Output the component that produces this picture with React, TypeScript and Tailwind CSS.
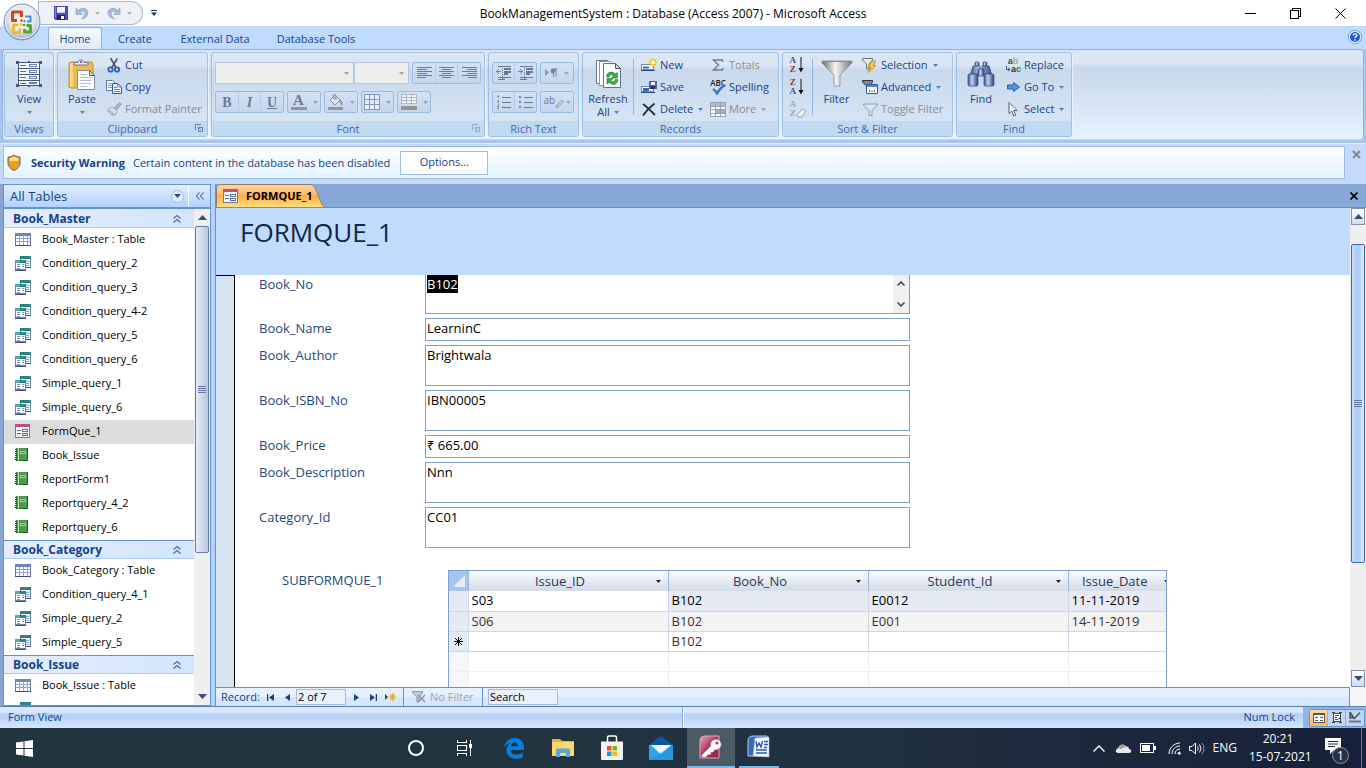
import { useEffect, useRef } from "react";
import type { ReactNode } from "react";

/* ---------- shared bits ---------- */

function Svg({ w, h, crisp, children, className = "" }: { w: number; h: number; crisp?: boolean; children: ReactNode; className?: string }) {
  return (
    <svg width={w} height={h} viewBox={`0 0 ${w} ${h}`} fill="none" shapeRendering={crisp ? "crispEdges" : "auto"} aria-hidden="true" className={`shrink-0 ${className}`}>
      {children}
    </svg>
  );
}

function Down({ color = "#5a7fb5" }: { color?: string }) {
  return (
    <Svg w={5} h={3}>
      <path d="M0 0h5L2.5 3z" fill={color} />
    </Svg>
  );
}

function Divider() {
  return <div className="mt-1.5 h-14 w-px self-start bg-[#94b6df]" />;
}

/* ---------- ribbon icons ---------- */

const OfficeLogo = () => (
  <Svg w={38} h={38}>
    <defs>
      <radialGradient id="orb" cx="50%" cy="40%" r="60%">
        <stop offset="0" stopColor="#ffffff" />
        <stop offset="0.6" stopColor="#e2e7ef" />
        <stop offset="0.9" stopColor="#aebbd0" />
        <stop offset="1" stopColor="#7d90b0" />
      </radialGradient>
    </defs>
    <circle cx="19" cy="19" r="18" fill="url(#orb)" stroke="#8295b3" />
    <circle cx="19" cy="19" r="16.5" stroke="#f6f9fd" strokeOpacity=".8" />
    <g strokeLinejoin="round">
      <path d="M14 17.500H9.500V9h9v5" stroke="#dd4413" strokeWidth="3" />
      <path d="M22 13.500h5.500v5h-3.500" stroke="#3f8edb" strokeWidth="2" />
      <path d="M15.500 22h-5v7.500h6.500v-4" stroke="#f5b616" strokeWidth="2.600" />
      <path d="M21.500 26v3h6v-6.500h-4" stroke="#58a628" strokeWidth="3" />
    </g>
    <circle cx="18.500" cy="17.500" r="1.300" fill="#dd4413" />
    <circle cx="21.500" cy="18" r="1.200" fill="#3f8edb" />
    <circle cx="18" cy="21.500" r="1.200" fill="#f5b616" />
    <circle cx="21" cy="22" r="1.300" fill="#58a628" />
  </Svg>
);

const SaveDisk = () => (
  <Svg w={14} h={14} crisp>
    <path d="M0 0h14v14H1l-1-1z" fill="#4a4db0" />
    <path d="M1 1h1v11H1z" fill="#8587d8" />
    <path d="M3 1h8v6H3z" fill="#f2f4fb" />
    <path d="M3 6h8v1H3z" fill="#c9cfe8" />
    <path d="M3 9h8v5H3z" fill="#26275e" />
    <path d="M7 10h3v3H7z" fill="#fff" />
  </Svg>
);

const Undo = ({ flip = false }: { flip?: boolean }) => (
  <Svg w={14} h={13} className={flip ? "-scale-x-100" : ""}>
    <path d="M1 1v6.500h6.500L5.300 5.300C7.500 3 10.300 4.500 9.700 7.300 9.300 9.300 8 10.800 6.500 12 10 11.500 13 9 13 5.500 12.600 1 7 0 3.300 3.300z" fill="#a9bcd8" stroke="#8ea5c8" strokeWidth=".7" />
  </Svg>
);

const ViewIcon = () => (
  <Svg w={26} h={28} crisp>
    <path d="M2.500 2.500h21v23h-21z" fill="#f4f7fc" stroke="#44597f" />
    <path d="M2 8.500h22M2 14.500h22M2 20.500h22" stroke="#44597f" />
    <path d="M4 5.500h6M4 11.500h6M4 17.500h6M4 23.500h6" stroke="#5c7196" />
    <path d="M13.500 4.500h7v2h-7zM13.500 10.500h7v2h-7zM13.500 16.500h7v2h-7zM13.500 22.500h7v1h-7z" fill="#fff" stroke="#6d80a3" />
    <path d="M0 1h3v3H0zM23 1h3v3h-3zM0 24h3v3H0zM23 24h3v3h-3zM12 1h2v2h-2zM12 25h2v2h-2z" fill="#44597f" />
  </Svg>
);

const PasteIcon = () => (
  <Svg w={28} h={31}>
    <rect x="1" y="3" width="24" height="26" rx="2" fill="#f0b94d" stroke="#c98e2b" />
    <path d="M2 4h3v24H2z" fill="#fad68c" />
    <path d="M6 6V3.500h4C10 0 16 0 16 3.500h4V6z" fill="#e5e8ee" stroke="#737b8b" />
    <circle cx="13" cy="3" r="1" fill="#555" />
    <path d="M9.500 11.500h12l5 5v14h-17z" fill="#fdfdff" stroke="#7c8fae" />
    <path d="M21.500 11.500v5h5z" fill="#d6e0ef" stroke="#4f6082" />
    <path d="M12 15.500h7M12 18.500h11M12 21.500h11M12 24.500h11M12 27.500h7" stroke="#b1bfd6" />
  </Svg>
);

const CutIcon = () => (
  <Svg w={14} h={15}>
    <path d="M3.500 0 9 9.500M10.500 0 5 9.500" stroke="#4c5a70" strokeWidth="1.700" />
    <path d="M10.500 0v3L8 6" stroke="#b2bccb" strokeWidth=".8" />
    <circle cx="3.500" cy="11.500" r="2.200" stroke="#2f5fb5" strokeWidth="1.800" />
    <circle cx="10" cy="11.500" r="2.200" stroke="#2f5fb5" strokeWidth="1.800" />
  </Svg>
);

const CopyIcon = () => (
  <Svg w={16} h={14}>
    <path d="M.5.5h6l3 3v7h-9z" fill="#fff" stroke="#5377bb" />
    <path d="M2 3.500h4M2 5.500h5M2 7.500h5" stroke="#7397d3" />
    <path d="M6.500 3.500h5l4 3.500v6.500h-9z" fill="#f6f9ff" stroke="#36579b" />
    <path d="M11.500 3.500v3.500h4M8 7.500h3M8 9.500h6M8 11.500h6" stroke="#5f86ca" />
  </Svg>
);

const PainterIcon = () => (
  <Svg w={16} h={14}>
    <path d="m8 6 5.500-5.500 2 1.500-5 6z" fill="#a9b2c2" stroke="#8994a8" strokeWidth=".7" />
    <path d="M6 4.500 11.500 9 9 13 5 9.500 1 8.500z" fill="#d8dfea" stroke="#9aa7bc" />
    <path d="M1 8.500 9 13l-3 .5z" fill="#98a4ba" />
  </Svg>
);

const AlignIcon = ({ kind }: { kind: "left" | "center" | "right" }) => (
  <Svg w={15} h={12} crisp>
    <path
      d={kind === "left" ? "M0 .5h15M0 2.500h10M0 4.500h15M0 6.500h10M0 8.500h15M0 10.500h9" : kind === "center" ? "M0 .5h15M3 2.500h9M0 4.500h15M3 6.500h9M0 8.500h15M3 10.500h9" : "M0 .5h15M5 2.500h10M0 4.500h15M5 6.500h10M0 8.500h15M6 10.500h9"}
      stroke="#6b7a92"
    />
  </Svg>
);

const IndentIcon = ({ out = false }: { out?: boolean }) => (
  <Svg w={16} h={14} crisp>
    <path d="M2 .5h13M2 11.500h13M2 13.500h7" stroke="#6b7a92" />
    <path d="M8 3h7M8 5.500h7M8 8h4" stroke="#6b7a92" strokeWidth="2" />
    <path d="M6.500 0v14" stroke="#6b7a92" strokeDasharray="1 1" />
    <path d={out ? "M0 5.500h5M3 4.500h1M3 6.500h1M2 3.500h1M2 7.500h1" : "M0 5.500h5M1 4.500h1M1 6.500h1M2 3.500h1M2 7.500h1"} stroke="#6f86ac" />
  </Svg>
);

const ListIcon = ({ numbered = false }: { numbered?: boolean }) => (
  <Svg w={16} h={14} crisp>
    <path d="M6 2.500h9M6 7.500h9M6 12.500h9" stroke="#6b7a92" />
    {numbered ? <path d="M1 1.500h1M2.500 0v3M1 5.500h2M1 7.500h2M1 11.500h2M1 13.500h2M2.500 9v5M2.500 5v3" stroke="#8391aa" /> : <path d="M1 1h2v2H1zM1 6h2v2H1zM1 11h2v2H1z" fill="#74839c" />}
  </Svg>
);

const DirectionIcon = () => (
  <Svg w={13} h={10}>
    <path d="m0 1 4 3.500L0 8z" fill="#8a9ab4" />
    <path d="M8.500 1v8M11 1v8" stroke="#74839c" />
    <path d="M12.500.5H8a2.500 2.500 0 0 0 0 5h.5z" fill="#74839c" />
  </Svg>
);

const HighlightIcon = () => (
  <span className="relative flex h-3.5 w-4 items-start text-[10px] leading-[10px] text-[#6b7a92]">
    ab
    <Svg w={9} h={10} className="absolute -right-1 bottom-0">
      <path d="m1 9 1-3 5-5 1.500 1.500-5 5z" fill="#c9cfd9" stroke="#8391aa" strokeWidth=".8" />
    </Svg>
  </span>
);

const FillIcon = () => (
  <Svg w={16} h={16}>
    <path d="m2 6 5-5 5 5-5 5z" fill="#e2e6ee" stroke="#8290aa" />
    <path d="M5 5V2c0-2 3-2 3 0v4M12 6c2 1 2.500 3 2 5-1.500-1-2-3-2-5z" stroke="#8290aa" fill="#b3bdcd" />
    <path d="M0 13h15v3H0z" fill="#9a938c" />
  </Svg>
);

const GridIcon = () => (
  <Svg w={16} h={16} crisp>
    <path d="M.5.5h15v15H.5zM5.500 0v16M10.500 0v16M0 5.500h16M0 10.500h16" fill="#e7eefa" stroke="#8196bb" />
  </Svg>
);

const AltFillIcon = () => (
  <Svg w={16} h={16} crisp>
    <path d="M.5.5h15v9H.5zM5.500 0v10M10.500 0v10M0 3.500h16M0 6.500h16" fill="#f2f3f6" stroke="#aeb5c1" />
    <path d="M0 12h16v4H0z" fill="#9a938c" />
  </Svg>
);

const RefreshIcon = () => (
  <Svg w={27} h={30}>
    <path d="M1.500 1.500h11l4 4v19h-15z" fill="#fff" stroke="#67738c" />
    <path d="M4.500 2.500h11l4 4v20h-15z" fill="#fff" stroke="#8894a9" />
    <path d="M8.500 4.500h12l5 5v19h-17z" fill="#fff" stroke="#67738c" />
    <path d="M20.500 4.500v5h5z" fill="#d3dae6" stroke="#4c5a73" />
    <path d="M11.500 18c0-5 6-6.500 8.500-3l2.500-1.500V19h-6l2-2c-1.500-2-4-1.500-4 1z" fill="#44a944" stroke="#1e7a27" strokeWidth=".6" />
    <path d="M23 20.500c0 5-6 6.500-8.500 3L12 25v-5.500h6l-2 2c1.500 2 4 1.500 4-1z" fill="#44a944" stroke="#1e7a27" strokeWidth=".6" />
  </Svg>
);

const NewIcon = () => (
  <Svg w={16} h={14}>
    <path d="M.5 6.500h12v5H.5z" fill="#fff" stroke="#6889bd" />
    <path d="M2 8.500h6v2H2z" fill="#3a6ab2" />
    <path d="M0 12.500h14" stroke="#27477e" />
    <path d="M12 0v9M7.500 4.500h9M9 1.500l6 6M15 1.500l-6 6" stroke="#e9bd1f" strokeWidth="1.300" />
    <circle cx="12" cy="4.500" r="2" fill="#fff6ac" />
  </Svg>
);

const SaveRecIcon = () => (
  <Svg w={16} h={13} crisp>
    <path d="M.5 5.500h12v5H.5z" fill="#fff" stroke="#6889bd" />
    <path d="M2 7h6v3H2z" fill="#3a6ab2" />
    <path d="M0 11h14v1H0z" fill="#27477e" />
    <path d="M8 0h8v8H8z" fill="#5a5da8" />
    <path d="M10 1h4v3h-4z" fill="#eef0fb" />
    <path d="M10 5h4v3h-4z" fill="#2b2d62" />
  </Svg>
);

const DeleteIcon = () => (
  <Svg w={14} h={13}>
    <path d="M1 1c4 3 8 7 12 11M12.500.5C8 4 4 8 1 12.500" stroke="#2d3238" strokeWidth="1.900" />
  </Svg>
);

const SigmaIcon = () => (
  <Svg w={12} h={12}>
    <path d="M10.500 3V1H1.500l5 5-5 5h9V9" stroke="#6f7b90" strokeWidth="1.500" />
  </Svg>
);

const SpellingIcon = () => (
  <span className="relative flex h-4 w-4 justify-center overflow-visible text-[8px] leading-[8px] font-semibold text-[#222]">
    ABC
    <Svg w={14} h={11} className="absolute bottom-0 left-0.5">
      <path d="M1 5c2 1 3 2.500 4 4.500C7 5.500 9.500 3 13 1" stroke="#3c72d0" strokeWidth="2.400" />
    </Svg>
  </span>
);

const MoreIcon = () => (
  <Svg w={16} h={15} crisp>
    <path d="M.5.5h15v14H.5z" fill="#fff" stroke="#98a2b4" />
    <path d="M1 1h14v3H1z" fill="#b7bfcc" />
    <path d="M5 8h10v3H5z" fill="#a7b0bf" />
    <path d="M5.500 1v13M10.500 1v13M1 4.500h14M1 7.500h14M1 11.500h14" stroke="#98a2b4" />
  </Svg>
);

const LETTERS = "flex flex-col items-center font-['Liberation_Serif',serif] text-[9px] leading-[9px] font-bold";

const SortIcon = ({ top, bottom, a, b }: { top: string; bottom: string; a: string; b: string }) => (
  <span className="flex h-[18px] w-4 items-center gap-0.5">
    <span className={LETTERS}>
      <span className={a}>{top}</span>
      <span className={b}>{bottom}</span>
    </span>
    <Svg w={6} h={16}>
      <path d="M3 0v13" stroke="#111" />
      <path d="M.500 11h5L3 15.500z" fill="#111" />
    </Svg>
  </span>
);

const ClearSortIcon = () => (
  <span className="relative flex h-[18px] w-4">
    <span className={`${LETTERS} text-[#97a2b5]`}>
      <span>A</span>
      <span>Z</span>
    </span>
    <Svg w={11} h={10} className="absolute bottom-0 left-1.5">
      <path d="m1 7 5-6 4 2-4 6H2z" fill="#eef1f6" stroke="#97a2b5" />
    </Svg>
  </span>
);

const FunnelBig = () => (
  <Svg w={32} h={28}>
    <defs>
      <linearGradient id="fun">
        <stop offset="0" stopColor="#6b6b6b" />
        <stop offset=".45" stopColor="#f5f5f5" />
        <stop offset="1" stopColor="#777" />
      </linearGradient>
    </defs>
    <path d="M1 1h30v2L19 15v11h-6V15L1 3z" fill="url(#fun)" stroke="#8c8c8c" strokeWidth=".8" />
    <path d="M1.500 1.500h29" stroke="#8a8a8a" />
  </Svg>
);

const FunnelSmall = ({ tone = "#707070", light = "#e7e7e7" }: { tone?: string; light?: string }) => <path d="M.5.500h10v1.500L7 6v5H4.500V6L.5 2z" fill={light} stroke={tone} />;

const SelectionIcon = () => (
  <Svg w={16} h={15}>
    <FunnelSmall />
    <path d="M11 3 6 9h3l-3 5.500 8-7h-3l3-4.500z" fill="#fbd335" stroke="#b58518" strokeWidth=".8" />
  </Svg>
);

const AdvancedIcon = () => (
  <Svg w={16} h={14}>
    <FunnelSmall tone="#333" light="#888" />
    <path d="M4.500 4.500h11v9h-11z" fill="#fff" stroke="#2f5aa5" />
    <path d="M5 5h10v2H5z" fill="#4f83d6" />
    <path d="M7 11h1M9.500 11h1M12 11h1" stroke="#333" strokeWidth="1.300" />
  </Svg>
);

const ToggleFilterIcon = () => (
  <Svg w={15} h={13}>
    <path d="M.5 1h14v1L9 7.500v5H6v-5L.5 2z" fill="#dfe6f0" stroke="#8b9bb5" />
  </Svg>
);

const Binoculars = () => (
  <Svg w={28} h={27}>
    <defs>
      <linearGradient id="bin">
        <stop offset="0" stopColor="#3a5596" />
        <stop offset=".4" stopColor="#bdd0f3" />
        <stop offset="1" stopColor="#2c4480" />
      </linearGradient>
    </defs>
    <g fill="url(#bin)" stroke="#2f4678" strokeWidth=".7">
      <rect x="8" y="1" width="4" height="4" rx="1" />
      <rect x="16" y="1" width="4" height="4" rx="1" />
      <path d="M6 5h7v8H3.500zM15 5h7l2.500 8H15z" />
      <rect x="1" y="13" width="10" height="12" rx="1.500" />
      <rect x="17" y="13" width="10" height="12" rx="1.500" />
      <rect x="11" y="8" width="6" height="7" />
    </g>
  </Svg>
);

const ReplaceIcon = () => (
  <span className="flex h-4 w-4 flex-col font-['Liberation_Sans',sans-serif] text-[9px] leading-[8px] font-bold">
    <span className="text-[#444]">
      a<span className="text-[#a0a8b5]">b</span>
    </span>
    <span className="flex items-center justify-end text-[#333]">
      <Svg w={5} h={6}>
        <path d="M.5 0v3.500h3M2 2l2 1.500L2 5" stroke="#3b5a94" />
      </Svg>
      a<span className="text-[#189228]">c</span>
    </span>
  </span>
);

const GoToIcon = () => (
  <Svg w={13} h={10}>
    <path d="M.5 3h6V.5l6 4.500-6 4.500V7h-6z" fill="#5b8fe6" stroke="#2f5cb0" />
  </Svg>
);

const PointerIcon = () => (
  <Svg w={10} h={15}>
    <path d="M1 .500v11l2.700-2.500 2 5 2-1-2-4.500H9z" fill="#fff" stroke="#4f5e78" />
  </Svg>
);

const Launcher = ({ tone = "#6683b0" }: { tone?: string }) => (
  <Svg w={8} h={8} crisp>
    <path d="M.5 6V.5H6M3.500 3.500h4v4h-4zM3 3l3 3" stroke={tone} fill="none" />
  </Svg>
);

/* ---------- ribbon parts ---------- */

function Group({ label, width, launcher, children }: { label: string; width: string; launcher?: string; children: ReactNode }) {
  return (
    <section
      aria-label={label}
      className={`${width} flex h-[85px] shrink-0 flex-col rounded-[3px] border border-[#9fc0e0] bg-linear-to-b from-[#dbe6f4] from-15% via-[#c8d9ed] via-20% to-[#d9e8f6] shadow-[1px_1px_0_#eaf3fc]`}
    >
      <div className="flex flex-1">{children}</div>
      <h2 className="relative flex h-[15px] items-center justify-center rounded-b-[2px] bg-[#c1d9f1] text-[11px] leading-[15px] text-[#3f68ab]">
        {label}
        {launcher && (
          <button aria-label={`${label} settings`} className="absolute right-1 bottom-1">
            <Launcher tone={launcher} />
          </button>
        )}
      </h2>
    </section>
  );
}

function Big({ icon, label, second, arrow, width }: { icon: ReactNode; label: string; second?: string; arrow?: boolean; width: string }) {
  return (
    <button className={`${width} flex flex-col items-center pt-1`}>
      <span className="flex h-[34px] items-center">{icon}</span>
      <span className="leading-4">{label}</span>
      <span className="flex h-2.5 items-center gap-1 leading-[10px]">
        {second}
        {arrow && <Down />}
      </span>
    </button>
  );
}

function Small({ icon, label, arrow, off }: { icon: ReactNode; label: string; arrow?: boolean; off?: boolean }) {
  return (
    <button disabled={off} className={`flex h-[22px] items-center gap-[3px] whitespace-nowrap ${off ? "text-[#8d8d8d]" : ""}`}>
      <span className="flex w-4 justify-center">{icon}</span>
      {label}
      {arrow && (
        <span className="ml-0.5">
          <Down color={off ? "#a9a9a9" : "#5a7fb5"} />
        </span>
      )}
    </button>
  );
}

const BOX = "flex h-[22px] shrink-0 items-center rounded-[2px] border border-[#9dbae0] bg-linear-to-b from-[#d3e1f3] to-[#c3d7f0] divide-x divide-[#b3cae8]";

function Tool({ label, width, children, arrow }: { label: string; width: string; children: ReactNode; arrow?: boolean }) {
  return (
    <button disabled aria-label={label} className={`${width} flex h-full items-center justify-center gap-1.5`}>
      {children}
      {arrow && <Down color="#a3a3a3" />}
    </button>
  );
}

function Combo({ label, width }: { label: string; width: string }) {
  return (
    <span className={`${width} relative flex h-[22px] items-center border border-[#b5c7de] bg-[#ededed]`}>
      <select disabled aria-label={label} className="h-full w-full appearance-none" />
      <span className="absolute right-1">
        <Down color="#a3a3a3" />
      </span>
    </span>
  );
}

function Ribbon() {
  return (
    <div className="flex h-[94px] shrink-0 flex-col bg-[#a9c5eb]">
      <div className="mx-0.5 flex h-[91px] gap-[3px] overflow-hidden rounded-[4px] border border-[#8db2e3] border-b-[#8ff0f5] bg-linear-to-b from-[#dbe6f4] from-15% via-[#c7d8ed] via-20% to-[#e4f3fd] px-px pt-0.5 text-[11px] text-[#15428b]">
        <Group label="Views" width="w-[50px]">
          <Big icon={<ViewIcon />} label="View" arrow width="w-full" />
        </Group>
        <Group label="Clipboard" width="w-[151px]" launcher="#6683b0">
          <Big icon={<PasteIcon />} label="Paste" arrow width="w-12" />
          <div className="flex flex-col pt-px">
            <Small icon={<CutIcon />} label="Cut" />
            <Small icon={<CopyIcon />} label="Copy" />
            <Small icon={<PainterIcon />} label="Format Painter" off />
          </div>
        </Group>
        <Group label="Font" width="w-[274px]" launcher="#9ba8bc">
          <div className="flex flex-col gap-[7px] px-[3px] pt-[9px]">
            <div className="flex">
              <Combo label="Font name" width="w-[139px]" />
              <Combo label="Font size" width="w-[55px]" />
              <div className={`${BOX} ml-[3px]`}>
                <Tool label="Align left" width="w-[23px]"><AlignIcon kind="left" /></Tool>
                <Tool label="Center" width="w-[22px]"><AlignIcon kind="center" /></Tool>
                <Tool label="Align right" width="w-[22px]"><AlignIcon kind="right" /></Tool>
              </div>
            </div>
            <div className="flex gap-[3px] text-[#6b7a92]">
              <div className={BOX}>
                <Tool label="Bold" width="w-[23px]"><b className="font-['Liberation_Serif',serif] text-[14px]">B</b></Tool>
                <Tool label="Italic" width="w-[22px]"><i className="font-['Liberation_Serif',serif] text-[14px] font-bold">I</i></Tool>
                <Tool label="Underline" width="w-[22px]"><u className="font-['Liberation_Serif',serif] text-[14px] font-bold">U</u></Tool>
              </div>
              <div className={BOX}>
                <Tool label="Font color" width="w-8" arrow>
                  <span className="flex w-4 flex-col items-center border-b-[3px] border-[#9a938c] font-['Liberation_Serif',serif] text-[15px] leading-[13px] font-bold">A</span>
                </Tool>
              </div>
              <div className={BOX}><Tool label="Fill color" width="w-8" arrow><FillIcon /></Tool></div>
              <div className={BOX}><Tool label="Gridlines" width="w-[31px]" arrow><GridIcon /></Tool></div>
              <div className={BOX}><Tool label="Alternate fill" width="w-8" arrow><AltFillIcon /></Tool></div>
            </div>
          </div>
        </Group>
        <Group label="Rich Text" width="w-[91px]">
          <div className="grid grid-cols-[45px_34px] content-start gap-x-[3px] gap-y-[7px] px-[3px] pt-[9px]">
            <div className={BOX}>
              <Tool label="Decrease indent" width="w-[22px]"><IndentIcon /></Tool>
              <Tool label="Increase indent" width="w-[21px]"><IndentIcon out /></Tool>
            </div>
            <div className={BOX}><Tool label="Text direction" width="w-8" arrow><DirectionIcon /></Tool></div>
            <div className={BOX}>
              <Tool label="Numbering" width="w-[22px]"><ListIcon numbered /></Tool>
              <Tool label="Bullets" width="w-[21px]"><ListIcon /></Tool>
            </div>
            <div className={BOX}><Tool label="Highlight" width="w-8" arrow><HighlightIcon /></Tool></div>
          </div>
        </Group>
        <Group label="Records" width="w-[197px]">
          <Big icon={<RefreshIcon />} label="Refresh" second="All" arrow width="w-[50px]" />
          <Divider />
          <div className="flex w-[70px] flex-col pt-px pl-[7px]">
            <Small icon={<NewIcon />} label="New" />
            <Small icon={<SaveRecIcon />} label="Save" />
            <Small icon={<DeleteIcon />} label="Delete" arrow />
          </div>
          <div className="flex flex-col pt-px pl-1.5">
            <Small icon={<SigmaIcon />} label="Totals" off />
            <Small icon={<SpellingIcon />} label="Spelling" />
            <Small icon={<MoreIcon />} label="More" arrow off />
          </div>
        </Group>
        <Group label="Sort & Filter" width="w-[171px]">
          <div className="flex w-[29px] flex-col items-center pt-px">
            <button aria-label="Ascending" className="flex h-[22px] items-center"><SortIcon top="A" bottom="Z" a="text-[#2b5797]" b="text-[#963232]" /></button>
            <button aria-label="Descending" className="flex h-[22px] items-center"><SortIcon top="Z" bottom="A" a="text-[#963232]" b="text-[#2b5797]" /></button>
            <button aria-label="Clear all sorts" disabled className="flex h-[22px] items-center"><ClearSortIcon /></button>
          </div>
          <Divider />
          <Big icon={<FunnelBig />} label="Filter" width="w-[47px]" />
          <div className="flex flex-col pt-px pl-0.5">
            <Small icon={<SelectionIcon />} label="Selection" arrow />
            <Small icon={<AdvancedIcon />} label="Advanced" arrow />
            <Small icon={<ToggleFilterIcon />} label="Toggle Filter" off />
          </div>
        </Group>
        <Group label="Find" width="w-[116px]">
          <Big icon={<Binoculars />} label="Find" width="w-12" />
          <div className="flex flex-col pt-px">
            <Small icon={<ReplaceIcon />} label="Replace" />
            <Small icon={<GoToIcon />} label="Go To" arrow />
            <Small icon={<PointerIcon />} label="Select" arrow />
          </div>
        </Group>
      </div>
    </div>
  );
}

/* ---------- title bar and tabs ---------- */

function TitleBar() {
  return (
    <header className="relative shrink-0">
      <div className="flex h-[26px] items-center bg-white">
        <div className="flex flex-1 items-center">
          <div className="ml-[38px] flex h-6 w-[105px] items-center gap-[7px] rounded-tl-[4px] rounded-r-full rounded-bl-[18px] border border-[#aab6c8] bg-[#eef2f8] pl-[15px]">
            <button aria-label="Save"><SaveDisk /></button>
            <button aria-label="Undo" disabled className="flex items-center gap-1.5"><Undo /><Down color="#b3b3b3" /></button>
            <button aria-label="Redo" disabled className="flex items-center gap-1.5"><Undo flip /><Down color="#b3b3b3" /></button>
          </div>
          <button aria-label="Customize toolbar" className="ml-2">
            <Svg w={6} h={6}><path d="M0 .5h6" stroke="#15346e" /><path d="M0 2.500h6L3 6z" fill="#15346e" /></Svg>
          </button>
        </div>
        <h1 className="pt-0.5 text-center text-[12px] text-black">BookManagementSystem : Database (Access 2007) - Microsoft Access</h1>
        <div className="flex flex-1 items-center justify-end gap-[34px] pr-5">
          <button aria-label="Minimize"><Svg w={11} h={11} crisp><path d="M0 5.500h11" stroke="#000" /></Svg></button>
          <button aria-label="Restore"><Svg w={11} h={11} crisp><path d="M.5 2.500h8v8h-8zM2.500 2V.5h8v8H9" stroke="#000" /></Svg></button>
          <button aria-label="Close"><Svg w={11} h={11}><path d="m.5.5 10 10M10.500.5l-10 10" stroke="#000" /></Svg></button>
        </div>
      </div>
      <nav className="flex h-[23px] items-end bg-[#bfdbff] pl-12 text-[11px] text-[#15428b]">
        <a href="#home" className="flex h-[22px] w-[54px] items-center justify-center rounded-t-[3px] border border-b-0 border-[#8db2e3] bg-linear-to-b from-[#f5fafe] to-[#dfe9f6] pt-0.5">Home</a>
        <a href="#create" className="flex h-[22px] w-[66px] items-center justify-center pt-0.5">Create</a>
        <a href="#external" className="flex h-[22px] w-[94px] items-center justify-center pt-0.5">External Data</a>
        <a href="#tools" className="flex h-[22px] w-[108px] items-center justify-center pt-0.5">Database Tools</a>
        <button aria-label="Help" className="mr-1 mb-[5px] ml-auto">
          <Svg w={14} h={14}>
            <circle cx="7" cy="7" r="6.500" fill="#fff" stroke="#6f95cf" />
            <circle cx="7" cy="7" r="5" fill="#1f57cf" />
            <path d="M5.200 5.500c0-2.300 3.700-2.200 3.700-.2C8.900 6.600 7 6.700 7 8.300M7 9.300v1.400" stroke="#fff" strokeWidth="1.300" />
          </Svg>
        </button>
      </nav>
      <button aria-label="Office menu" className="absolute top-[3px] left-[3px]"><OfficeLogo /></button>
    </header>
  );
}

function SecurityBar() {
  return (
    <div className="flex h-[41px] shrink-0 items-start border-t border-[#e3efff] bg-[#c4dafa] pt-0.5 pl-[3px] text-[11px] text-[#15428b]">
      <div className="flex h-[33px] flex-1 items-center border border-[#9ebbde] bg-linear-to-b from-white to-[#e3f3ff] pl-[3px]">
        <Svg w={14} h={17}>
          <path d="M7 1c2 1.500 4 2 6 2v6c0 3.500-3 6-6 7.500C4 15 1 12.500 1 9V3c2 0 4-.5 6-2z" fill="#f59a1b" stroke="#5a6070" />
          <path d="M7 2.500c1.500 1 3 1.500 4.500 1.500v3h-9V4C4 4 5.500 3.500 7 2.500z" fill="#ffe279" />
        </Svg>
        <strong className="ml-2.5 pt-0.5 font-bold">Security Warning</strong>
        <span className="ml-2 pt-0.5">Certain content in the database has been disabled</span>
        <button className="ml-2.5 h-6 w-[88px] border border-[#9ebbde] bg-white">Options...</button>
      </div>
      <button aria-label="Close message bar" className="mt-1 mr-[5px] ml-[7px]">
        <Svg w={9} h={9}><path d="m1 1 7 7M8 1 1 8" stroke="#7f8793" strokeWidth="2" /></Svg>
      </button>
    </div>
  );
}

/* ---------- navigation pane ---------- */

type Kind = "table" | "query" | "form" | "report";

const SECTIONS: { name: string; items: [Kind, string][] }[] = [
  {
    name: "Book_Master",
    items: [
      ["table", "Book_Master : Table"],
      ["query", "Condition_query_2"],
      ["query", "Condition_query_3"],
      ["query", "Condition_query_4-2"],
      ["query", "Condition_query_5"],
      ["query", "Condition_query_6"],
      ["query", "Simple_query_1"],
      ["query", "Simple_query_6"],
      ["form", "FormQue_1"],
      ["report", "Book_Issue"],
      ["report", "ReportForm1"],
      ["report", "Reportquery_4_2"],
      ["report", "Reportquery_6"],
    ],
  },
  {
    name: "Book_Category",
    items: [
      ["table", "Book_Category : Table"],
      ["query", "Condition_query_4_1"],
      ["query", "Simple_query_2"],
      ["query", "Simple_query_5"],
    ],
  },
  {
    name: "Book_Issue",
    items: [
      ["table", "Book_Issue : Table"],
      ["query", ""],
    ],
  },
];

function FormGlyph() {
  return (
    <Svg w={15} h={14} crisp>
      <path d="M.5.5h14v13H.5z" fill="#f3f5fb" stroke="#6b7da3" />
      <path d="M0 0h15v3H0z" fill="#c0527a" />
      <path d="M2 6.500h4M2 9.500h4" stroke="#5a6f9e" />
      <path d="M7.500 5.500h5v2h-5zM7.500 9.500h5v2h-5z" fill="#fff" stroke="#5a6f9e" />
    </Svg>
  );
}

function ObjectIcon({ kind }: { kind: Kind }) {
  if (kind === "table")
    return (
      <Svg w={16} h={13} crisp>
        <path d="M.5.5h15v12H.5z" fill="#fff" stroke="#6076a8" />
        <path d="M0 0h16v3H0z" fill="#6f86bb" />
        <path d="M4.500 3v9M8.500 3v9M12.500 3v9M1 5.500h14M1 8.500h14" stroke="#93a5cc" />
        <path d="M0 12h16v1H0z" fill="#3e5180" />
      </Svg>
    );
  if (kind === "query")
    return (
      <Svg w={16} h={15} crisp>
        <path d="M5.500.5h10v11h-10z" fill="#f5f9fd" stroke="#5f86a8" />
        <path d="M5 0h11v3H5z" fill="#2e8287" />
        <path d="M8 5.500h6M8 7.500h6M8 9.500h6" stroke="#8ba9c6" />
        <path d="M.5 4.500h10v9H.5z" fill="#fff" stroke="#5f86a8" />
        <path d="M0 4h11v3H0z" fill="#5aa5aa" />
        <path d="M5 4h6v3H5z" fill="#2e8287" />
        <path d="M2 8.500h3M7 8.500h2M2 10.500h3M7 10.500h2M2 12.500h3" stroke="#7c97bd" />
        <path d="M0 14h11v1H0zM11 11h5v1h-5z" fill="#3d5484" />
      </Svg>
    );
  if (kind === "form") return <FormGlyph />;
  return (
    <Svg w={14} h={14} crisp>
      <path d="M1 0h12v13H1z" fill="#4e9a4c" />
      <path d="M12 0h1v13H1v-1h11z" fill="#275f2a" />
      <path d="M5 3h6v3H5z" fill="#a8d3a0" />
      <path d="M6 4h4v1H6z" fill="#397d39" />
      <path d="M3 0v13" stroke="#bfe0b8" />
      <path d="M.5 1v12" stroke="#333" strokeDasharray="1 1" strokeWidth="2" />
    </Svg>
  );
}

const Chevrons = ({ className = "" }: { className?: string }) => (
  <Svg w={8} h={8} className={className}>
    <path d="m.5 3.500 3.500-3 3.500 3M.5 7.500 4 4.500l3.500 3" stroke="#3c67a8" strokeWidth="1.100" />
  </Svg>
);

function NavPane() {
  return (
    <aside className="flex w-[211px] shrink-0 border-l-[3px] border-[#86a7d6]">
      <div className="flex min-w-0 flex-1 flex-col border border-[#6593cf] bg-white">
        <div className="flex h-6 shrink-0 items-center border-b-2 border-[#6593cf] bg-linear-to-b from-[#e2eefe] to-[#b2d2ff] pl-1.5 text-[13px] text-[#15428b]">
          <span className="flex-1 pt-0.5">All Tables</span>
          <button aria-label="Choose category" className="mr-1 flex size-[13px] items-center justify-center rounded-full border border-[#a3bde2] bg-[#e3edfa]">
            <Svg w={7} h={4}><path d="M0 0h7L3.500 4z" fill="#2b4c86" /></Svg>
          </button>
          <button aria-label="Collapse pane" className="flex h-5 w-[22px] items-center justify-center border-l border-white">
            <Chevrons className="-rotate-90" />
          </button>
        </div>
        <div className="flex min-h-0 flex-1">
          <div className="min-w-0 flex-1 overflow-hidden text-[11px]">
            {SECTIONS.map((s, i) => (
              <section key={s.name}>
                <h3 className={`flex h-[19px] items-center justify-between border-b border-[#a9cbf7] bg-linear-to-r from-[#e4eefd] to-[#d3e5ff] pt-px pr-[13px] pl-[9px] text-[12px] leading-4 font-bold text-[#15428b] ${i ? "border-t border-t-[#6593cf]" : ""}`}>
                  {s.name}
                  <Chevrons />
                </h3>
                <ul>
                  {s.items.map(([kind, name]) => (
                    <li key={name} className={kind === "form" ? "bg-[#dcdcdc]" : ""}>
                      <a href="#object" className="flex h-6 items-center pb-0.5 pl-[11px] text-black">
                        <span className="flex w-[27px]"><ObjectIcon kind={kind} /></span>
                        {name}
                      </a>
                    </li>
                  ))}
                </ul>
              </section>
            ))}
          </div>
          <ScrollTrack grow="grow-0 basis-[327px]" plain />
        </div>
      </div>
    </aside>
  );
}

function ScrollTrack({ grow, plain }: { grow: string; plain?: boolean }) {
  const cap = plain ? "" : "border border-[#7f93b5] bg-linear-to-b from-white to-[#c9dcf8]";
  return (
    <div className="flex w-4 shrink-0 flex-col bg-[#efefef] px-px">
      <button aria-label="Scroll up" className={`flex h-[17px] shrink-0 items-center justify-center ${cap}`}>
        <Svg w={9} h={5}><path d="M0 5h9L4.500 0z" fill="#3f4c72" /></Svg>
      </button>
      {!plain && <div className="h-[19px] shrink-0" />}
      <div className={`${grow} flex min-h-0 flex-col items-center justify-center rounded-[2px] border ${plain ? "border-[#6a7ba5] bg-linear-to-r from-[#e8ecf4] to-[#bac7dc]" : "border-[#3c6ab3] bg-linear-to-r from-[#c8dcf8] via-[#a9c9f5] to-[#e2eeff]"}`}>
        <Svg w={8} h={8} crisp><path d="M0 .5h8M0 2.500h8M0 4.500h8M0 6.500h8" stroke="#66799e" /></Svg>
      </div>
      <button aria-label="Scroll down" className={`mt-auto flex h-[17px] shrink-0 items-center justify-center ${cap}`}>
        <Svg w={9} h={5}><path d="M0 0h9L4.500 5z" fill="#3f4c72" /></Svg>
      </button>
    </div>
  );
}

/* ---------- form ---------- */

const FIELDS: [string, string, string][] = [
  ["Book_Name", "LearninC", "h-[23px]"],
  ["Book_Author", "Brightwala", "h-[41px]"],
  ["Book_ISBN_No", "IBN00005", "h-[41px]"],
  ["Book_Price", "₹ 665.00", "h-[23px]"],
  ["Book_Description", "Nnn", "h-[41px]"],
  ["Category_Id", "CC01", "h-[41px]"],
];

const COLUMNS = ["Issue_ID", "Book_No", "Student_Id", "Issue_Date"];
const ROWS = [
  ["", "S03", "B102", "E0012", "11-11-2019"],
  ["", "S06", "B102", "E001", "14-11-2019"],
  ["new", "", "B102", "", ""],
  ["", "", "", "", ""],
  ["", "", "", "", ""],
];

function SubForm() {
  return (
    <div className="w-[719px] overflow-hidden border border-b-0 border-[#7ba0d4]">
      <table className="w-[819px] table-fixed border-collapse text-[13px] leading-[19px]">
        <colgroup>
          <col className="w-[19px]" />
          <col className="w-[200px]" />
          <col className="w-[200px]" />
          <col className="w-[200px]" />
          <col className="w-[200px]" />
        </colgroup>
        <thead>
          <tr className="h-5 bg-linear-to-b from-[#f8fafd] to-[#d3dbe9] text-[#1e395b]">
            <th className="border-r border-[#9eb6ce] bg-[#a9c4e9] p-0">
              <Svg w={12} h={12} className="ml-1"><path d="M12 0v12H0z" fill="#e3ecf8" /></Svg>
            </th>
            {COLUMNS.map((c) => (
              <th key={c} className="border-r border-[#9eb6ce] p-0 font-normal">
                {c === "Issue_Date" ? (
                  <span className="flex w-[100px] items-center justify-end gap-4">{c}<Svg w={5} h={3}><path d="M0 0h5L2.500 3z" fill="#222" /></Svg></span>
                ) : (
                  <span className="flex items-center pr-[7px]"><span className="flex-1 pr-1">{c}</span><Svg w={5} h={3}><path d="M0 0h5L2.500 3z" fill="#222" /></Svg></span>
                )}
              </th>
            ))}
          </tr>
        </thead>
        <tbody>
          {ROWS.map((r, i) => (
            <tr key={i} className={`h-5 ${i === 0 ? "bg-[#e7eaf5] text-black" : i === 1 ? "bg-[#f3f3f3] text-[#333]" : "bg-white text-[#333]"}`}>
              {r.map((v, j) => (
                <td
                  key={j}
                  className={`h-5 border-r border-b p-0 ${i < 3 ? "border-[#cdd6e6]" : "border-[#eef0f6]"} ${j === 0 ? (i < 3 ? "bg-[#e4ebf7]" : "bg-[#f5f7fd]") : "pl-[3px]"} ${i === 0 && j === 1 ? "bg-white" : ""}`}
                >
                  {v === "new" ? <Svg w={9} h={9} className="mx-auto"><path d="M4.500 0v9M0 4.500h9M1 1l7 7M8 1 1 8" stroke="#000" /></Svg> : v}
                </td>
              ))}
            </tr>
          ))}
        </tbody>
      </table>
    </div>
  );
}

function RecordNav() {
  const btn = "flex h-full w-[17px] items-center justify-center";
  return (
    <div className="flex h-[19px] shrink-0 items-center border-t border-r border-[#6593cf] bg-linear-to-b from-[#e6f0ff] from-50% to-[#d5e6ff] to-50% pl-[5px] text-[11px] text-[#15428b]">
      <span className="w-[41px]">Record:</span>
      <button aria-label="First record" className={btn}><Svg w={7} h={7}><path d="M.5 0v7" stroke="#15428b" strokeWidth="1.500" /><path d="M7 0v7L2 3.500z" fill="#15428b" /></Svg></button>
      <button aria-label="Previous record" className={btn}><Svg w={5} h={7}><path d="M5 0v7L0 3.500z" fill="#15428b" /></Svg></button>
      <input aria-label="Current record" defaultValue="2 of 7" className="h-4 w-[50px] border border-[#a8bcd9] bg-[#e9f1fd] px-px text-black" />
      <button aria-label="Next record" className="ml-0.5 flex h-full w-[17px] items-center justify-center"><Svg w={5} h={7}><path d="M0 0v7l5-3.500z" fill="#15428b" /></Svg></button>
      <button aria-label="Last record" className={btn}><Svg w={7} h={7}><path d="M6.500 0v7" stroke="#15428b" strokeWidth="1.500" /><path d="M0 0v7l5-3.500z" fill="#15428b" /></Svg></button>
      <button aria-label="New record" className={btn}><Svg w={11} h={8}><path d="M0 1v6l3-3z" fill="#15428b" /><path d="M7.500 0v8M4 4h7M5 1.500l5 5M10 1.500l-5 5" stroke="#dcb42c" strokeWidth="1.200" /></Svg></button>
      <span className="ml-1 flex h-full w-20 items-center gap-1 border-x border-[#6593cf] pl-2 whitespace-nowrap text-[#a5a5a5]">
        <Svg w={14} h={12}><path d="M.5.5h10v1.500L7 6v5H5V6L.5 2z" fill="#c2c7d1" stroke="#9299a8" /><path d="m6 4 7 7M13 4l-7 7" stroke="#8c95a8" strokeWidth="1.500" /></Svg>
        No Filter
      </span>
      <input aria-label="Search" defaultValue="Search" className="ml-[5px] h-4 w-[70px] border border-[#a8bcd9] bg-[#e9f1fd] px-px text-black" />
    </div>
  );
}

function DocumentArea() {
  const first = useRef<HTMLTextAreaElement>(null);
  useEffect(() => {
    first.current?.focus();
    first.current?.select();
  }, []);
  const box = "w-[485px] resize-none overflow-hidden border border-[#7da2ce] bg-white px-px text-[13px] leading-[18px] text-black outline-none";
  return (
    <main className="flex min-w-0 flex-1 flex-col">
      <div className="flex h-6 shrink-0 items-end border-b border-[#6593cf] bg-[#88a9d8]">
        <a href="#form" className="relative flex h-[23px] w-[110px] items-center gap-2 pl-[7px] text-[11px] font-bold text-black">
          <Svg w={110} h={23} className="absolute inset-0">
            <defs>
              <linearGradient id="tab" x2="0" y2="1">
                <stop offset="0" stopColor="#ffd6a4" />
                <stop offset=".45" stopColor="#ffb964" />
                <stop offset=".5" stopColor="#ffab3f" />
                <stop offset="1" stopColor="#fee17f" />
              </linearGradient>
            </defs>
            <path d="M.5 23V4q0-3.500 3.500-3.500h89c5 0 6 3 8 8l4 10c1 3 2.500 4.500 5 4.500" fill="url(#tab)" stroke="#8c8064" />
          </Svg>
          <span className="relative flex"><FormGlyph /></span>
          <span className="relative pt-0.5">FORMQUE_1</span>
        </a>
        <button aria-label="Close form" className="mr-2 mb-[7px] ml-auto">
          <Svg w={8} h={8}><path d="m.5.5 7 7M7.500.5l-7 7" stroke="#000" strokeWidth="1.700" /></Svg>
        </button>
      </div>
      <div className="flex min-h-0 flex-1">
        <div className="flex min-w-0 flex-1 flex-col">
          <h2 className="h-[67px] shrink-0 bg-[#c1dbfe] pt-1.5 pl-6 text-[26px] leading-9 text-[#0e2649]">FORMQUE_1</h2>
          <div className="flex min-h-0 flex-1 bg-white">
            <div className="w-[19px] shrink-0 border-t border-r border-black bg-[#d5e3f2]" />
            <div className="flex min-w-0 flex-1 flex-col overflow-hidden text-[13px] leading-[20px] text-[#1f497d]">
              <div className="flex flex-col gap-1 pl-6">
                <div className="flex">
                  <label htmlFor="f-no" className="w-[166px] leading-[19px]">Book_No</label>
                  <div className="flex h-[39px] w-[485px] border border-t-0 border-[#7da2ce]">
                    <textarea id="f-no" ref={first} defaultValue="B102" className="h-full min-w-0 flex-1 resize-none overflow-hidden px-px leading-[18px] text-black outline-none selection:bg-black selection:text-white" />
                    <div className="flex w-4 flex-col items-center justify-between bg-[#f0f0f0] py-1.5">
                      <Svg w={8} h={5}><path d="m.5 4.500 3.500-3.500 3.500 3.500" stroke="#444" strokeWidth="1.500" /></Svg>
                      <Svg w={8} h={5}><path d="M.5.5 4 4 7.500.5" stroke="#444" strokeWidth="1.500" /></Svg>
                    </div>
                  </div>
                </div>
                {FIELDS.map(([label, value, h]) => (
                  <div key={label} className="flex">
                    <label htmlFor={label} className="w-[166px]">{label}</label>
                    <textarea id={label} defaultValue={value} className={`${box} ${h}`} />
                  </div>
                ))}
              </div>
              <div className="flex pt-[22px] pl-[47px]">
                <span className="w-[166px] shrink-0">SUBFORMQUE_1</span>
                <SubForm />
              </div>
            </div>
          </div>
          <RecordNav />
        </div>
        <div className="flex w-4 shrink-0 flex-col bg-[#f5f5f5] pb-[19px]">
          <div className="flex min-h-0 flex-1"><ScrollTrack grow="grow-0 basis-[319px]" /></div>
        </div>
      </div>
    </main>
  );
}

/* ---------- status bar and taskbar ---------- */

function StatusBar() {
  return (
    <footer className="flex h-[22px] shrink-0 items-center border-t border-[#567db0] bg-linear-to-b from-[#d9e8fc] from-25% via-[#b2cff5] via-35% to-[#d5e5fb] text-[11px] text-[#15428b]">
      <span className="flex h-full w-1/2 items-center border-r border-[#86a9d8] pl-2">Form View</span>
      <span className="flex h-full flex-1 items-center justify-end border-l border-white pr-2">Num Lock</span>
      <div className="flex h-full items-center bg-[#92b5e8] pr-px pl-1.5">
        <div className="flex h-[18px] divide-x divide-[#8db2e3] rounded-[2px] border border-[#6593cf] bg-[#bdd5f7]">
          <button aria-label="Form view" className="flex w-[18px] items-center justify-center bg-linear-to-b from-[#fbdba9] to-[#fdb94e]">
            <Svg w={12} h={10} crisp><path d="M.5.5h11v9H.5z" fill="#fff" stroke="#555" /><path d="M0 0h12v2H0zM2 4h3v1H2zM2 7h3v1H2zM7 4h3v1H7zM7 7h3v1H7z" fill="#555" /></Svg>
          </button>
          <button aria-label="Layout view" className="flex w-[18px] items-center justify-center">
            <Svg w={10} h={11} crisp><path d="M1.500 1.500h7v8h-7z" fill="#fff" stroke="#444" /><path d="M0 0h3v1H0zM7 0h3v1H7zM0 10h3v1H0zM7 10h3v1H7zM3 3h4v1H3zM3 5h2v1H3zM6 6h2v1H6zM3 7h3v1H3z" fill="#444" /></Svg>
          </button>
          <button aria-label="Design view" className="flex w-[18px] items-center justify-center">
            <Svg w={12} h={11}><path d="M1 0v6h4zM11 .5 5 7" stroke="#555" strokeWidth="1.500" fill="#888" /><path d="M0 8.500h12v2H0z" fill="#777" /></Svg>
          </button>
        </div>
      </div>
    </footer>
  );
}

function Taskbar() {
  const slot = "flex h-full w-12 items-center justify-center";
  const apps: [string, ReactNode][] = [
    ["Search", <Svg w={18} h={18}><circle cx="9" cy="9" r="7" stroke="#fff" strokeWidth="2" /></Svg>],
    ["Task view", <Svg w={17} h={16} crisp><path d="M1.500 0v2.500h9V0M1.500 16v-2.500h9V16M1.500 5.500h9v5h-9zM14.500 0v16" stroke="#fff" /><path d="M13 4h3v4h-3z" fill="#fff" /></Svg>],
    ["Edge", <Svg w={22} h={22}><path d="M1 10.500C2 4 6.500 1 11.500 1 18 1 21 5.500 21 10.500V13H7.500c.3 3.200 3 4.600 6 4.600 2.300 0 4.500-.6 6.300-1.800v4.400c-2 1-4.500 1.500-7 1.500-5.500 0-9.300-3.200-9.300-8.700 0-3 1.500-5.700 4.300-7.200C4.800 6.300 2.500 8 1 10.500zM7.800 9.300h7.400C15.200 6.800 13.700 5.600 11.700 5.600S8.200 7 7.800 9.300z" fill="#0a7cdb" /></Svg>],
    ["File Explorer", <Svg w={22} h={20}><path d="M0 1h8l2 2h12v15H0z" fill="#eab13a" /><path d="M0 4h22v14H0z" fill="#fcd668" /><path d="M4 19v-7q0-1.500 1.500-1.500h11q1.500 0 1.500 1.500v7h-4v-4H8v4z" fill="#52a9e0" /></Svg>],
    ["Store", <Svg w={24} h={26}><path d="M7.500 7V2.500q0-1.500 1.500-1.500h6q1.500 0 1.500 1.500V7" stroke="#fff" strokeWidth="1.500" /><path d="M1 6.500h22V24q0 1-1 1H2q-1 0-1-1z" fill="#f2f2f2" /><path d="M7 11h4.500v4.500H7z" fill="#f25022" /><path d="M12.500 11H17v4.500h-4.500z" fill="#7fba00" /><path d="M7 16.500h4.500V21H7z" fill="#00a4ef" /><path d="M12.500 16.500H17V21h-4.500z" fill="#ffb900" /></Svg>],
    ["Mail", <Svg w={24} h={25}><path d="M0 9 12 0l12 9v3H0z" fill="#0b57a4" /><path d="M0 9h24v15H0z" fill="#2aa8ee" /><path d="M2 9h20L12 18.500z" fill="#f5f8fb" /><path d="M0 24 24 9v15z" fill="#1e8fdd" fillOpacity=".6" /></Svg>],
  ];
  return (
    <div className="flex h-10 shrink-0 items-center bg-linear-to-r from-[#21363f] via-[#20323f] via-60% to-[#17203a] text-[12px] text-white">
      <button aria-label="Start" className={slot}>
        <Svg w={17} h={17}><path d="m0 2.500 7.500-1v6.500H0zM8.500 1.300 17 0v8H8.500zM0 9h7.500v6.500l-7.500-1zM8.500 9H17v8l-8.500-1.200z" fill="#fff" /></Svg>
      </button>
      <div className="flex h-full flex-1 items-center pl-[343px]">
        {apps.map(([name, icon]) => (
          <button key={name} aria-label={name} className="flex h-full w-[49px] shrink-0 items-center justify-center">{icon}</button>
        ))}
        <button aria-label="Access" className="ml-0.5 flex h-full w-12 shrink-0 items-center justify-center border-b-2 border-[#76b9ed] bg-[#4b5b64]">
          <Svg w={24} h={24}>
            <defs><linearGradient id="acc" x2="1" y2="1"><stop offset="0" stopColor="#e8a8bb" /><stop offset=".5" stopColor="#a93359" /><stop offset="1" stopColor="#8e2145" /></linearGradient></defs>
            <path d="M6 1h14v22H1V6q0-5 5-5z" fill="url(#acc)" stroke="#dfa8b8" />
            <path d="m3 20 9-9c-1-4 2-6.500 5-6.500 3.500 0 5 3 5 5 0 3.500-3.500 5.500-6 5l-2 2.500-2 0-.5 2.500H9L7 22H3z" fill="#fdfdfd" stroke="#cdb3bc" strokeWidth=".6" />
            <circle cx="18" cy="8" r="1.500" fill="#a93359" />
          </Svg>
        </button>
        <button aria-label="Word" className="ml-1 flex h-full w-10 shrink-0 items-center justify-center border-b-2 border-[#76b9ed]">
          <Svg w={24} h={24}>
            <path d="M6 1h14v20H1V6q0-5 5-5z" fill="#3a69b8" stroke="#b4cbf0" />
            <path d="m8 3 14-1v20L6 21z" fill="#f4f7fd" stroke="#9db5dd" strokeWidth=".6" />
            <path d="m9 6 1 6 2-4 2 4 1.500-6M17 6.500h4M17 9.500h4M9 15h11M9 18h11M17 12.500h3" stroke="#2c58a8" strokeWidth="1.400" />
          </Svg>
        </button>
      </div>
      <div className="flex h-full items-center">
        <button aria-label="Hidden icons" className="mr-2.5"><Svg w={12} h={7}><path d="m.5 6.500 5.500-5.500 5.500 5.500" stroke="#fff" strokeWidth="1.300" /></Svg></button>
        <button aria-label="OneDrive" className="mr-2"><Svg w={17} h={11}><path d="M3 10C0 10 0 6 3 5.500 4 1 9 0 11 3.500c3 0 3 2 3 2.500 3 0 3 4 0 4z" fill="#e8e8e8" /><path d="M3.500 5C5 1 9 1 10.500 4L6 6z" fill="#9c9c9c" /></Svg></button>
        <button aria-label="Battery" className="mr-3"><Svg w={16} h={10} crisp><path d="M.5.5h13v9H.5z" stroke="#fff" /><path d="M2 2h8v6H2zM14 3h2v4h-2z" fill="#fff" /></Svg></button>
        <button aria-label="Network" className="mr-2"><Svg w={13} h={13}><path d="M1 12C1 6 6 1 12 1M4 12c0-4.500 3.500-8 8-8M7 12c0-3 2-5 5-5M9.500 12c0-1 1-2 2.500-2" stroke="#fff" /><circle cx="11.500" cy="11.500" r="1.200" fill="#fff" /></Svg></button>
        <button aria-label="Volume" className="mr-2"><Svg w={16} h={13}><path d="M.5 4.500H3L6.500 1v11L3 8.500H.5zM8.500 4.500q1.500 2 0 4M10.500 2.500q3 4 0 8" stroke="#fff" /><path d="M13 1q4 5.500 0 11" stroke="#8e97a5" /></Svg></button>
        <span className="mr-3">ENG</span>
        <time className="w-[58px] text-center leading-[18px] whitespace-nowrap">20:21<br />15-07-2021</time>
        <button aria-label="Notifications, 1 new" className="relative ml-[18px] flex h-6 w-[26px]">
          <Svg w={16} h={18}><path d="M0 2h16v12H9l-4 4v-4H0z" fill="#fff" /><path d="M3 5.500h10M3 8h10M3 10.500h7" stroke="#1c2740" /></Svg>
          <span className="absolute right-0.5 -bottom-1 flex size-[17px] items-center justify-center rounded-full border border-[#8d939f] bg-[#2b3040] text-[12px] leading-4">1</span>
        </button>
        <div className="ml-2.5 h-full w-[5px] border-l border-[#6b7280]" />
      </div>
    </div>
  );
}

export default function App() {
  return (
    <div className="flex h-screen flex-col overflow-hidden font-['Open_Sans','Noto_Sans',sans-serif]">
      <TitleBar />
      <Ribbon />
      <SecurityBar />
      <div className="flex min-h-0 flex-1">
        <NavPane />
        <div className="w-[5px] shrink-0 border-r border-[#6593cf] bg-[#b5d2fb]" />
        <DocumentArea />
      </div>
      <StatusBar />
      <Taskbar />
    </div>
  );
}
